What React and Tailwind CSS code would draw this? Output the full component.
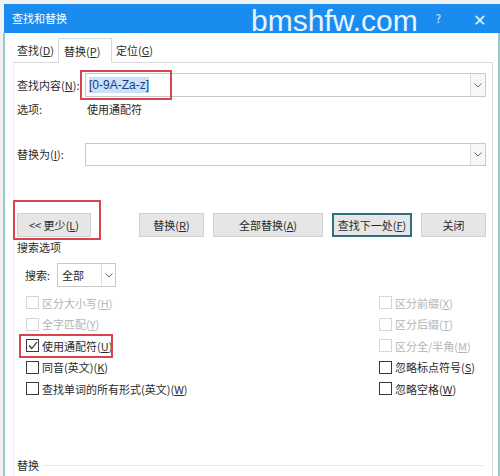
import React from 'react'

// small chevron used by the combo boxes
function Chevron() {
  return (
    <svg width="8" height="5" viewBox="0 0 8 5" fill="none">
      <path d="M0.5 0.5 L4 4 L7.5 0.5" stroke="#6b6b6b" strokeWidth="1" />
    </svg>
  )
}

function Key({ k }) {
  return (
    <span>
      (<u>{k}</u>)
    </span>
  )
}

function ComboInput({ height, children }) {
  return (
    <div className={`flex-1 flex border border-[#c9c9c9] bg-white ${height}`}>
      <div className="flex-1 flex items-center pl-[3px]">{children}</div>
      <div className="w-[15px] flex items-center justify-center border-l border-[#dedede] bg-[#f7f7f7]">
        <Chevron />
      </div>
    </div>
  )
}

function Button({ width, focused, children }) {
  return (
    <div
      className={`${width} h-[24px] flex items-center justify-center text-[11px] text-[#2b2b2b] bg-[#e6e6e6] ${
        focused ? 'border-2 border-[#2f6f82]' : 'border border-[#d2d2d2]'
      }`}
    >
      {children}
    </div>
  )
}

function Check({ label, k, checked, disabled }) {
  return (
    <div className="h-[21.5px] flex items-center gap-[3px]">
      <div
        className={`w-[13px] h-[13px] border bg-white flex items-center justify-center ${
          disabled ? 'border-[#d6d6d6]' : 'border-[#3a3a3a]'
        }`}
      >
        {checked && (
          <svg width="10" height="9" viewBox="0 0 10 9" fill="none">
            <path d="M1 4.5 L3.8 7.5 L9 1" stroke="#2b2b2b" strokeWidth="1.2" />
          </svg>
        )}
      </div>
      <span className={`text-[11px] ${disabled ? 'text-[#b4b4b4]' : 'text-[#2b2b2b]'}`}>
        {label}
        <Key k={k} />
      </span>
    </div>
  )
}

const leftOptions = [
  { label: '区分大小写', k: 'H', disabled: true },
  { label: '全字匹配', k: 'Y', disabled: true },
  { label: '使用通配符', k: 'U', checked: true, marked: true },
  { label: '同音(英文)', k: 'K' },
  { label: '查找单词的所有形式(英文)', k: 'W' },
]

const rightOptions = [
  { label: '区分前缀', k: 'X', disabled: true },
  { label: '区分后缀', k: 'T', disabled: true },
  { label: '区分全/半角', k: 'M', disabled: true },
  { label: '忽略标点符号', k: 'S' },
  { label: '忽略空格', k: 'W' },
]

export default function App() {
  return (
    <div className="w-[500px] h-[476px] overflow-hidden bg-[#f1f1f1] flex flex-col font-['Noto_Sans_CJK_SC',sans-serif]">
      <div className="h-[4px] shrink-0" />

      {/* title bar */}
      <div className="relative h-[29px] shrink-0 ml-[4px] bg-[#1a8cf0] flex items-center pl-[8px] pr-[14px]">
        <span className="text-[11px] text-white">查找和替换</span>
        <span className="ml-auto mr-[32px] text-[11px] text-white/90">?</span>
        <span className="text-[16px] leading-none text-white/90">✕</span>
        <span className="absolute left-[247px] top-[-6px] text-[30px] text-white/90 font-['Liberation_Sans',sans-serif]">
          bmshfw.com
        </span>
      </div>

      {/* dialog body */}
      <div className="flex-1 ml-[3px] border-l-2 border-r-2 border-[#96c8cc] bg-white pl-[8px] pr-[5px] pt-[5px] flex flex-col">
        {/* tabs */}
        <div className="flex h-[24px] text-[11px] text-[#2b2b2b]">
          <div className="w-[45px] flex items-center pl-[4px]">
            查找<Key k="D" />
          </div>
          <div className="w-[54px] flex items-center pl-[5px] bg-white border border-b-0 border-[#d9d9d9] relative z-10 h-[25px]">
            替换<Key k="P" />
          </div>
          <div className="w-[51px] flex items-center pl-[4px]">
            定位<Key k="G" />
          </div>
        </div>

        {/* tab panel */}
        <div className="flex-1 border-t border-r border-l border-t-[#d9d9d9] border-r-[#d9d9d9] border-l-[#eeeeee] pl-[3px] pr-[6px] flex flex-col text-[11px] text-[#2b2b2b]">
          <div className="mt-[10px] flex h-[24px]">
            <div className="w-[68px] flex items-center">
              查找内容<Key k="N" />:
            </div>
            <div className="relative flex-1 flex">
              <ComboInput height="h-[24px]">
                <span className="bg-[#c7e2fa] text-[#1b3a86] text-[12px] leading-[16px] font-['Liberation_Sans',sans-serif]">
                  [0-9A-Za-z]
                </span>
              </ComboInput>
              <div className="absolute left-[-5px] top-[-3px] w-[92px] h-[30px] border-2 border-[#d9434c]" />
            </div>
          </div>

          <div className="mt-[4px] h-[16px] flex items-center">
            <div className="w-[70px]">选项:</div>
            <div>使用通配符</div>
          </div>

          <div className="mt-[26px] flex h-[23px]">
            <div className="w-[68px] flex items-center">
              替换为<Key k="I" />:
            </div>
            <ComboInput height="h-[23px]" />
          </div>

          {/* buttons */}
          <div className="mt-[47px] flex">
            <div className="relative">
              <Button width="w-[74px]">
                &lt;&lt; 更少<Key k="L" />
              </Button>
              <div className="absolute left-[-4px] top-[-13px] w-[88px] h-[40px] border-2 border-[#d9434c]" />
            </div>
            <div className="ml-auto flex gap-[9px]">
              <Button width="w-[65px]">
                替换<Key k="R" />
              </Button>
              <Button width="w-[110px]">
                全部替换<Key k="A" />
              </Button>
              <Button width="w-[80px]" focused>
                查找下一处<Key k="F" />
              </Button>
              <Button width="w-[65px]">关闭</Button>
            </div>
          </div>

          <div className="mt-[3px] h-[15px] flex items-center">搜索选项</div>

          <div className="mt-[8px] h-[24px] flex pl-[8px]">
            <div className="w-[32px] flex items-center">搜索:</div>
            <div className="w-[59px] flex border border-[#c9c9c9]">
              <div className="flex-1 flex items-center pl-[4px]">全部</div>
              <div className="w-[14px] flex items-center justify-center border-l border-[#dedede]">
                <Chevron />
              </div>
            </div>
          </div>

          {/* search options */}
          <div className="mt-[5px] grid grid-cols-[353px_1fr] pl-[9px]">
            <div className="flex flex-col">
              {leftOptions.map((o) => (
                <div key={o.label} className="relative">
                  <Check label={o.label} k={o.k} checked={o.checked} disabled={o.disabled} />
                  {o.marked && (
                    <div className="absolute left-[-7px] top-[-1px] w-[94px] h-[24px] border-2 border-[#d9434c]" />
                  )}
                </div>
              ))}
            </div>
            <div className="flex flex-col">
              {rightOptions.map((o) => (
                <Check key={o.label} label={o.label} k={o.k} disabled={o.disabled} />
              ))}
            </div>
          </div>

          <div className="mt-[59px] h-[14px] flex items-center pr-[2px]">
            <span>替换</span>
            <div className="flex-1 ml-[4px] h-px bg-[#e6e6e6]" />
          </div>
        </div>
      </div>
    </div>
  )
}
